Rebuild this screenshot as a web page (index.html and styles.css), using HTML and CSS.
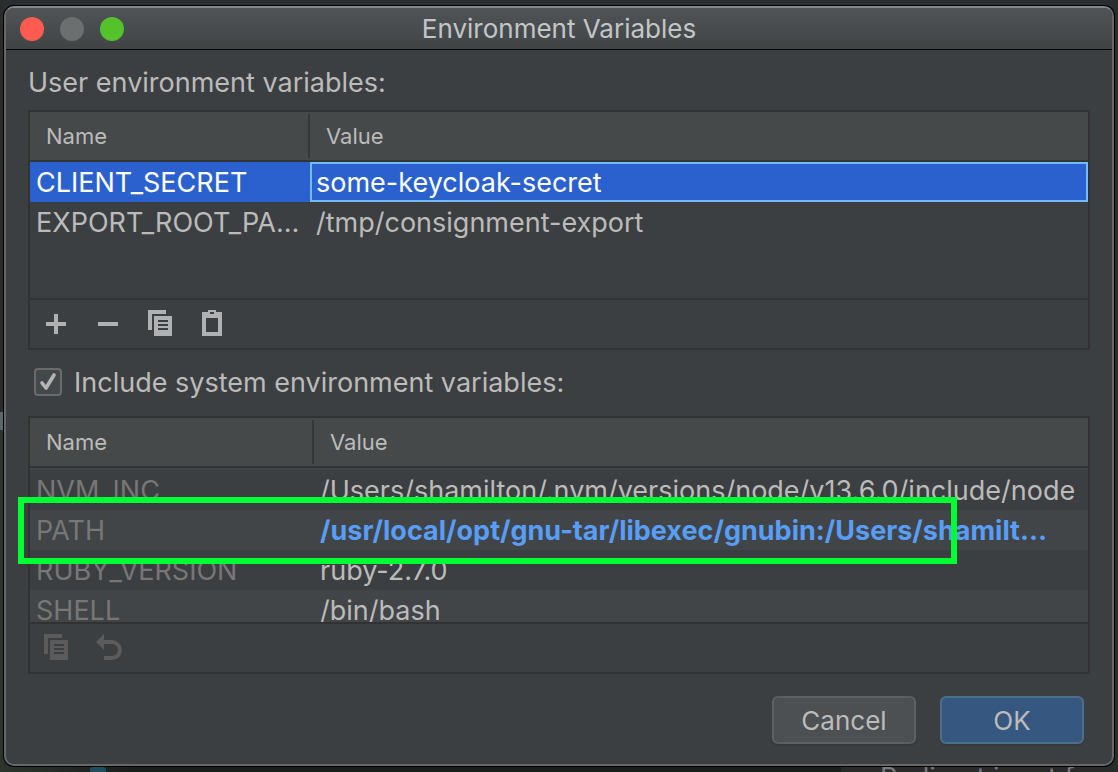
FILE: index.html
```html
<!DOCTYPE html>
<html lang="en">
<head>
<meta charset="utf-8">
<title>Environment Variables</title>
<link rel="stylesheet" href="styles.css">
</head>
<body>
<div class="backdrop" aria-hidden="true">
  <span class="backdrop-marker"></span>
  <span class="backdrop-pane"></span>
  <span class="backdrop-icon"></span>
  <span class="backdrop-text">Redirect input from:</span>
</div>
<main class="dialog" role="dialog" aria-labelledby="dialog-title">
  <header class="titlebar">
    <div class="lights">
      <button class="light light-close" type="button" aria-label="Close"></button>
      <button class="light light-minimize" type="button" aria-label="Minimize" disabled></button>
      <button class="light light-zoom" type="button" aria-label="Zoom"></button>
    </div>
    <h1 class="title" id="dialog-title">Environment Variables</h1>
  </header>
  <form class="content">
    <h2 class="section-label" id="user-label">User environment variables:</h2>
    <section class="panel">
      <div class="table-area table-area-user">
        <table class="vars" aria-labelledby="user-label">
          <colgroup><col class="col-user"><col></colgroup>
          <thead><tr><th scope="col">Name</th><th scope="col">Value</th></tr></thead>
          <tbody>
            <tr class="selected"><td>CLIENT_SECRET</td><td class="focused">some-keycloak-secret</td></tr>
            <tr><td>EXPORT_ROOT_PA…</td><td>/tmp/consignment-export</td></tr>
          </tbody>
        </table>
      </div>
      <div class="toolbar">
        <button class="tool" type="button" aria-label="Add"><svg viewBox="0 0 32 32"><path d="M6 14h8V6h4v8h8v4h-8v8h-4v-8H6z"/></svg></button>
        <button class="tool" type="button" aria-label="Remove"><svg viewBox="0 0 32 32"><path d="M6 14h20v4H6z"/></svg></button>
        <button class="tool" type="button" aria-label="Copy"><svg viewBox="0 0 32 32"><path d="M4 2h18v4H8v16H4z"/><path fill-rule="evenodd" d="M10 8h18v20H10zM14 12v2h10v-2zM14 16v2h10v-2zM14 20v2h10v-2z"/></svg></button>
        <button class="tool" type="button" aria-label="Paste"><svg viewBox="0 0 32 32"><path fill-rule="evenodd" d="M6 4h6V2h8v2h6v24H6zM14 4v2h4V4zM10 10v14h12V10z"/></svg></button>
      </div>
    </section>
    <label class="include"><input class="check" type="checkbox" checked><span class="include-text" id="system-label">Include system environment variables:</span></label>
    <section class="panel">
      <div class="table-area table-area-system">
        <table class="vars vars-system" aria-labelledby="system-label">
          <colgroup><col class="col-system"><col></colgroup>
          <thead><tr><th scope="col">Name</th><th scope="col">Value</th></tr></thead>
          <tbody>
            <tr><td>NVM_INC</td><td>/Users/shamilton/.nvm/versions/node/v13.6.0/include/node</td></tr>
            <tr><td>PATH</td><td class="modified">/usr/local/opt/gnu-tar/libexec/gnubin:/Users/shamilt…</td></tr>
            <tr><td>RUBY_VERSION</td><td>ruby-2.7.0</td></tr>
            <tr><td>SHELL</td><td>/bin/bash</td></tr>
          </tbody>
        </table>
      </div>
      <div class="toolbar">
        <button class="tool" type="button" aria-label="Copy" disabled><svg viewBox="0 0 32 32"><path d="M4 2h18v4H8v16H4z"/><path fill-rule="evenodd" d="M10 8h18v20H10zM14 12v2h10v-2zM14 16v2h10v-2zM14 20v2h10v-2z"/></svg></button>
        <button class="tool" type="button" aria-label="Revert" disabled><svg viewBox="0 0 32 32"><path d="M4 10l8-8v6h8a10 10 0 0 1 0 20h-8v-4h8a6 6 0 0 0 0-12h-8v6z"/></svg></button>
      </div>
      <div class="highlight"></div>
    </section>
    <footer class="actions">
      <button class="button" type="button">Cancel</button>
      <button class="button button-default" type="submit">OK</button>
    </footer>
  </form>
</main>
</body>
</html>
```
FILE: styles.css
```css
* {
  box-sizing: border-box;
}

body {
  margin: 0;
  padding: 6px 4px;
  min-height: 100vh;
  overflow: hidden;
  position: relative;
  background: #262727;
  color: #bbbbbb;
  font: 27px/32px Inter, "Liberation Sans", sans-serif;
}

.backdrop {
  position: absolute;
  inset: 0;
  overflow: hidden;
  background: linear-gradient(#2b2e30 6px, transparent 6px), linear-gradient(90deg, #2c342c, #1b1c1c 140px, #1b1c1c 840px, #2a2a2b 842px);
}

.backdrop-marker {
  position: absolute;
  left: 0;
  top: 0;
  width: 4px;
  height: 430px;
  background: linear-gradient(#2a2b2b 412px, #5c666c 412px);
}

.backdrop-pane {
  position: absolute;
  right: 0;
  top: 0;
  width: 4px;
  height: 100%;
  background: #2a2b2b;
}

.backdrop-icon {
  position: absolute;
  left: 90px;
  bottom: 0;
  width: 16px;
  height: 5px;
  border-radius: 3px 3px 0 0;
  background: #1f4f5f;
}

.backdrop-text {
  position: absolute;
  left: 880px;
  bottom: -22px;
  color: #77797a;
  white-space: nowrap;
}

.dialog {
  position: relative;
  border: 2px solid #656768;
  border-top-color: #858688;
  border-radius: 10px;
  background: #3c3f41;
  box-shadow: 0 0 0 1px #000000;
  overflow: hidden;
}

.titlebar {
  display: grid;
  grid-template-columns: 1fr auto 1fr;
  align-items: center;
  height: 42px;
  padding: 0 14px;
  border-bottom: 1px solid #000000;
  background: linear-gradient(#515457, #414445);
}

.lights {
  display: flex;
  gap: 16px;
}

.light {
  width: 24px;
  height: 24px;
  padding: 0;
  border: 0;
  border-radius: 50%;
}

.light-close {
  background: #ff5b51;
}

.light-minimize {
  background: #6c6f70;
}

.light-zoom {
  background: #53c22b;
}

.title {
  margin: 0;
  color: #c3c6c8;
  font-size: 26px;
  font-weight: 400;
}

.content {
  padding: 17px 22px 20px;
}

.section-label {
  margin: 0 0 11px;
  font-size: 27px;
  font-weight: 400;
}

.panel {
  position: relative;
  border: 2px solid #323232;
}

.table-area {
  overflow: hidden;
}

.table-area-user {
  height: 186px;
}

.table-area-system {
  height: 204px;
}

.vars {
  width: 100%;
  table-layout: fixed;
  border-collapse: separate;
  border-spacing: 0;
}

.col-user {
  width: 280px;
}

.col-system {
  width: 284px;
}

th {
  height: 50px;
  padding: 0 16px;
  border-bottom: 2px solid #323435;
  background: #45494a;
  font-size: 22px;
  font-weight: 400;
  text-align: left;
}

th:first-child {
  background: linear-gradient(#35383a, #35383a) right center / 2px 44px no-repeat #45494a;
}

td {
  height: 40px;
  padding: 2px 6px 0;
  overflow: hidden;
  text-overflow: ellipsis;
  white-space: nowrap;
}

.selected td {
  background: #2b61cf;
  color: #ffffff;
}

.selected .focused {
  padding: 2px 4px 0;
  border: 2px solid #72bbff;
}

.vars-system td:first-child {
  color: #777777;
}

.vars-system tr:nth-child(even) td {
  background: #414547;
}

.vars-system tbody tr:first-child td {
  height: 42px;
  border-top: 2px solid #414547;
}

.vars-system .modified {
  color: #589df6;
  font-weight: 700;
}

.toolbar {
  display: flex;
  align-items: center;
  gap: 20px;
  height: 50px;
  padding: 0 10px;
  border-top: 2px solid #323232;
}

.tool {
  width: 32px;
  height: 32px;
  padding: 0;
  border: 0;
  background: none;
  color: #afb1b3;
}

.tool:disabled {
  color: #5b5b5b;
}

.tool svg {
  display: block;
  width: 32px;
  height: 32px;
  fill: currentColor;
}

.include {
  display: flex;
  align-items: center;
  gap: 12px;
  padding: 15px 6px 17px;
}

.include-text {
  padding-top: 2px;
}

.check {
  appearance: none;
  width: 28px;
  height: 28px;
  margin: 0;
  border: 2px solid #6b6b6b;
  border-radius: 4px;
  background: #43494a;
}

.check:checked {
  background: #43494a url("data:image/svg+xml,%3Csvg xmlns='http://www.w3.org/2000/svg' viewBox='0 0 24 24'%3E%3Cpath d='M6 13l4 5L18 5' fill='none' stroke='%23b4b4b4' stroke-width='3.6' stroke-linecap='round' stroke-linejoin='round'/%3E%3C/svg%3E") center / 24px 24px no-repeat;
}

.highlight {
  position: absolute;
  top: 79px;
  left: -12px;
  right: 131px;
  height: 67px;
  border: 6px solid #00ff33;
  pointer-events: none;
}

.actions {
  display: flex;
  justify-content: flex-end;
  gap: 24px;
  padding: 22px 6px 0 0;
}

.button {
  width: 144px;
  height: 48px;
  padding: 2px 0 0;
  border: 2px solid #5e6060;
  border-radius: 6px;
  background: #4c5052;
  box-shadow: 0 2px 0 #36393a;
  color: #bbbbbb;
  font: inherit;
  font-size: 26px;
}

.button-default {
  border-color: #4c708c;
  background: #365880;
}
```
